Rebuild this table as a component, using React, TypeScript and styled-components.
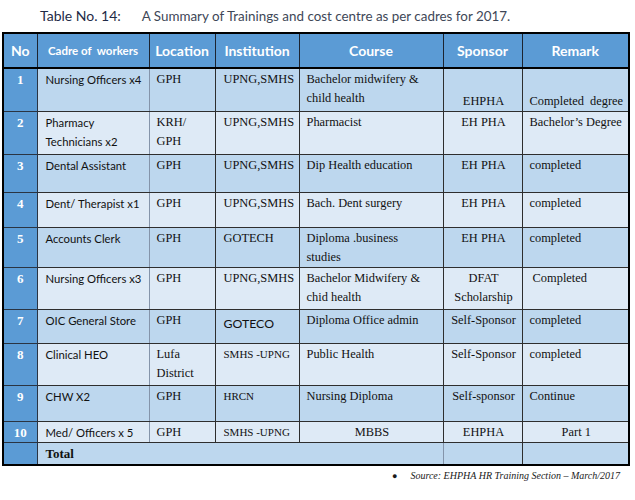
import React from "react";
import styled, { createGlobalStyle } from "styled-components";

const GlobalStyle = createGlobalStyle`
  html, body {
    margin: 0;
    padding: 0;
    background: #fff;
  }
  body {
    width: 635px;
    height: 500px;
    overflow: hidden;
  }
`;

const Page = styled.div`
  box-sizing: border-box;
  width: 635px;
  height: 500px;
  padding-left: 2px;
`;

const Title = styled.div`
  box-sizing: border-box;
  display: flex;
  align-items: baseline;
  gap: 21px;
  height: 32px;
  padding: 6px 0 0 38px;
  font-family: Lato, "Open Sans", sans-serif;
  line-height: 19px;
`;

const TitleLabel = styled.span`
  color: #1f2b47;
  font-size: 14px;
`;

const TitleText = styled.span`
  color: #3e4757;
  font-size: 13.4px;
`;

const Table = styled.table`
  width: 626px;
  border-collapse: collapse;
  table-layout: fixed;
  border: 2px solid #000;
`;

const HeadRow = styled.tr`
  height: 35px;
  background: #5b9bd5;
`;

const HeadCell = styled.th<{ $small?: boolean }>`
  padding: 0;
  border: 1px solid #1c2430;
  border-bottom: 2px solid #000;
  color: #fff;
  font-family: Lato, "Open Sans", sans-serif;
  font-weight: 700;
  font-size: ${(p) => (p.$small ? "11.5px" : "14px")};
  text-align: center;
  vertical-align: middle;
  white-space: pre;
`;

const Row = styled.tr<{ $shade: boolean; $h: number }>`
  height: ${(p) => p.$h}px;
  background: ${(p) => (p.$shade ? "#bdd7ee" : "#deeaf6")};
`;

const NoCell = styled.td`
  padding: 1px 0 0;
  background: #5b9bd5;
  border: 1px solid #2a3442;
  color: #fff;
  font-family: "Liberation Serif", "Times New Roman", serif;
  font-weight: 700;
  font-size: 13px;
  line-height: 19px;
  text-align: center;
  vertical-align: top;
`;

const Cell = styled.td<{ $center?: boolean; $bottom?: boolean }>`
  padding: 1px 5px 0 7px;
  border: 1px solid #2e2e2e;
  color: #111;
  font-family: "Liberation Serif", "Times New Roman", serif;
  font-size: 12.4px;
  line-height: 19px;
  text-align: ${(p) => (p.$center ? "center" : "left")};
  vertical-align: ${(p) => (p.$bottom ? "bottom" : "top")};
  white-space: pre;
  overflow: hidden;

  &:nth-child(2) {
    border-right-color: #8494aa;
  }
  &:nth-child(3) {
    border-left-color: #8494aa;
  }
`;

const CadreCell = styled(Cell)`
  padding-left: 8px;
  font-family: Lato, "Open Sans", sans-serif;
  font-size: 11.3px;
`;

const InstCell = styled(Cell)<{ $kind?: "sans" | "small" }>`
  padding-left: 8px;
  font-family: ${(p) =>
    p.$kind === "sans"
      ? `Lato, "Open Sans", sans-serif`
      : `"Liberation Serif", "Times New Roman", serif`};
  font-size: ${(p) =>
    p.$kind === "sans" ? "12.3px" : p.$kind === "small" ? "11px" : "12.4px"};
  padding-top: ${(p) => (p.$kind === "sans" ? "4px" : "1px")};
`;

const TotalCell = styled(Cell)`
  padding-left: 8px;
  font-weight: 700;
  font-size: 13px;
  vertical-align: middle;
`;

const Source = styled.div`
  display: flex;
  align-items: baseline;
  justify-content: flex-end;
  gap: 13px;
  padding: 4px 15px 0 0;
  color: #1a1a1a;
  font-family: "Liberation Serif", "Times New Roman", serif;
  font-style: italic;
  font-size: 10px;
`;

const Bullet = styled.span`
  font-style: normal;
  font-size: 9px;
`;

type RowData = {
  no: string;
  cadre: string;
  location: string;
  institution: string;
  instKind?: "sans" | "small";
  course: string;
  courseCenter?: boolean;
  sponsor: string;
  remark: string;
  remarkCenter?: boolean;
  bottom?: boolean;
  h: number;
};

const rows: RowData[] = [
  {
    no: "1",
    cadre: "Nursing Officers x4",
    location: "GPH",
    institution: "UPNG,SMHS",
    course: "Bachelor midwifery &\nchild health",
    sponsor: "EHPHA",
    remark: "Completed  degree",
    bottom: true,
    h: 43,
  },
  {
    no: "2",
    cadre: "Pharmacy\nTechnicians x2",
    location: "KRH/\nGPH",
    institution: "UPNG,SMHS",
    course: "Pharmacist",
    sponsor: "EH PHA",
    remark: "Bachelor\u2019s Degree",
    h: 43,
  },
  {
    no: "3",
    cadre: "Dental Assistant",
    location: "GPH",
    institution: "UPNG,SMHS",
    course: "Dip Health education",
    sponsor: "EH PHA",
    remark: "completed",
    h: 38,
  },
  {
    no: "4",
    cadre: "Dent/ Therapist x1",
    location: "GPH",
    institution: "UPNG,SMHS",
    course: "Bach. Dent surgery",
    sponsor: "EH PHA",
    remark: "completed",
    h: 35,
  },
  {
    no: "5",
    cadre: "Accounts Clerk",
    location: "GPH",
    institution: "GOTECH",
    course: "Diploma .business\nstudies",
    sponsor: "EH PHA",
    remark: "completed",
    h: 40,
  },
  {
    no: "6",
    cadre: "Nursing Officers x3",
    location: "GPH",
    institution: "UPNG,SMHS",
    course: "Bachelor Midwifery &\nchid health",
    sponsor: "DFAT\nScholarship",
    remark: " Completed",
    h: 42,
  },
  {
    no: "7",
    cadre: "OIC General Store",
    location: "GPH",
    institution: "GOTECO",
    instKind: "sans",
    course: "Diploma Office admin",
    sponsor: "Self-Sponsor",
    remark: "completed",
    h: 34,
  },
  {
    no: "8",
    cadre: "Clinical HEO",
    location: "Lufa\nDistrict",
    institution: "SMHS -UPNG",
    instKind: "small",
    course: "Public Health",
    sponsor: "Self-Sponsor",
    remark: "completed",
    h: 42,
  },
  {
    no: "9",
    cadre: "CHW X2",
    location: "GPH",
    institution: "HRCN",
    instKind: "small",
    course: "Nursing Diploma",
    sponsor: "Self-sponsor",
    remark: "Continue",
    h: 36,
  },
  {
    no: "10",
    cadre: "Med/ Officers x 5",
    location: "GPH",
    institution: "SMHS -UPNG",
    instKind: "small",
    course: "MBBS",
    courseCenter: true,
    sponsor: "EHPHA",
    remark: "Part 1",
    remarkCenter: true,
    h: 21,
  },
];

export default function App() {
  return (
    <Page>
      <GlobalStyle />
      <Title>
        <TitleLabel>Table No. 14:</TitleLabel>
        <TitleText>A Summary of Trainings and cost centre as per cadres for 2017.</TitleText>
      </Title>
      <Table>
        <colgroup>
          <col style={{ width: 34 }} />
          <col style={{ width: 112 }} />
          <col style={{ width: 66 }} />
          <col style={{ width: 84 }} />
          <col style={{ width: 144 }} />
          <col style={{ width: 79 }} />
          <col style={{ width: 107 }} />
        </colgroup>
        <thead>
          <HeadRow>
            <HeadCell>No</HeadCell>
            <HeadCell $small>Cadre of  workers</HeadCell>
            <HeadCell>Location</HeadCell>
            <HeadCell>Institution</HeadCell>
            <HeadCell>Course</HeadCell>
            <HeadCell>Sponsor</HeadCell>
            <HeadCell>Remark</HeadCell>
          </HeadRow>
        </thead>
        <tbody>
          {rows.map((r, i) => (
            <Row key={r.no} $shade={i % 2 === 0} $h={r.h}>
              <NoCell>{r.no}</NoCell>
              <CadreCell>{r.cadre}</CadreCell>
              <Cell>{r.location}</Cell>
              <InstCell $kind={r.instKind}>{r.institution}</InstCell>
              <Cell $center={r.courseCenter}>{r.course}</Cell>
              <Cell $center $bottom={r.bottom}>
                {r.sponsor}
              </Cell>
              <Cell $center={r.remarkCenter} $bottom={r.bottom}>
                {r.remark}
              </Cell>
            </Row>
          ))}
          <Row $shade $h={23}>
            <NoCell />
            <TotalCell colSpan={4}>Total</TotalCell>
            <Cell />
            <Cell />
          </Row>
        </tbody>
      </Table>
      <Source>
        <Bullet>{"\u25CF"}</Bullet>
        <span>Source: EHPHA HR Training Section – March/2017</span>
      </Source>
    </Page>
  );
}
